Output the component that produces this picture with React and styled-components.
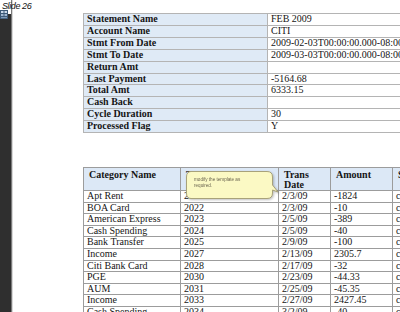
import React from 'react';
import styled, { createGlobalStyle } from 'styled-components';

const Global = createGlobalStyle`
  html, body { margin: 0; padding: 0; background: #fff; overflow: hidden; }
`;

const Page = styled.div`
  position: relative;
  display: flex;
  width: 400px;
  height: 312px;
  overflow: hidden;
`;

const Strip = styled.div`
  width: 11px;
  flex: none;
  background: linear-gradient(#fff 0 14px, #2f2f2f 14px);
  border-right: 1px solid #7a7a7a;
  box-shadow: 1px 0 0 #d8d8d8;
  padding-top: 5px;
`;

const SlideLabel = styled.div`
  position: absolute;
  left: 2px;
  top: 1px;
  font-family: "Liberation Sans", Arial, sans-serif;
  font-style: italic;
  font-size: 9px;
  letter-spacing: -0.4px;
  color: #111;
`;

const Content = styled.div`
  flex: 1;
  overflow: hidden;
  padding: 13px 0 0 71px;
  display: flex;
  flex-direction: column;
  gap: 34px;
`;

const Table = styled.table`
  border-collapse: collapse;
  table-layout: fixed;
  width: ${({ w }) => w}px;
  font-family: "Liberation Serif", "Times New Roman", serif;
  font-size: 10px;
  color: #151515;
`;

const Cell = styled.td`
  border: 1px solid ${({ soft }) => (soft ? '#b4b4b4' : '#9c9c9c')};
  padding: 0 3px;
  line-height: ${({ soft }) => (soft ? '10.9px' : '10.6px')};
  white-space: nowrap;
  overflow: hidden;
  font-weight: ${({ label }) => (label ? 'bold' : 'normal')};
  background: ${({ label }) => (label ? '#dfeaf6' : '#fff')};
`;

const Head = styled.th`
  border: 1px solid #9c9c9c;
  padding: 2px 5px 0;
  line-height: 10px;
  height: 17px;
  text-align: left;
  vertical-align: top;
  font-weight: bold;
  background: #dce8f6;
  white-space: nowrap;
  overflow: hidden;
`;

const Wrap = styled.div`
  position: relative;
`;

const Callout = styled.div`
  position: absolute;
  left: 103px;
  top: 4px;
  width: 94px;
  height: 30px;
  filter: drop-shadow(1px 1px 1px rgba(0, 0, 0, 0.25));
`;

const CalloutText = styled.div`
  position: absolute;
  left: 8px;
  top: 6px;
  width: 48px;
  font-family: "Liberation Sans", Arial, sans-serif;
  font-size: 4.6px;
  line-height: 6px;
  color: #6b6650;
`;

const summary = [
  ['Statement Name', 'FEB 2009'],
  ['Account Name', 'CITI'],
  ['Stmt From Date', '2009-02-03T00:00:00.000-08:00'],
  ['Stmt To Date', '2009-03-03T00:00:00.000-08:00'],
  ['Return Amt', ''],
  ['Last Payment', '-5164.68'],
  ['Total Amt', '6333.15'],
  ['Cash Back', ''],
  ['Cycle Duration', '30'],
  ['Processed Flag', 'Y'],
];

const rows = [
  ['Apt Rent', '2021', '2/3/09', '-1824'],
  ['BOA Card', '2022', '2/3/09', '-10'],
  ['American Express', '2023', '2/5/09', '-389'],
  ['Cash Spending', '2024', '2/5/09', '-40'],
  ['Bank Transfer', '2025', '2/9/09', '-100'],
  ['Income', '2027', '2/13/09', '2305.7'],
  ['Citi Bank Card', '2028', '2/17/09', '-32'],
  ['PGE', '2030', '2/23/09', '-44.33'],
  ['AUM', '2031', '2/25/09', '-45.35'],
  ['Income', '2033', '2/27/09', '2427.45'],
  ['Cash Spending', '2034', '3/2/09', '-40'],
];

const GridIcon = () => (
  <svg width="8" height="9" viewBox="0 0 8 9">
    <rect x="0" y="0" width="8" height="9" fill="#3d5a78" />
    <rect x="1" y="1" width="2.5" height="2" fill="#c9d8ea" />
    <rect x="4.5" y="1" width="2.5" height="2" fill="#c9d8ea" />
    <rect x="1" y="4" width="2.5" height="2" fill="#9fb6d0" />
    <rect x="4.5" y="4" width="2.5" height="2" fill="#9fb6d0" />
    <rect x="1" y="7" width="6" height="1.2" fill="#7f9aba" />
  </svg>
);

const Bubble = () => (
  <svg width="94" height="30" viewBox="0 0 94 30" style={{ position: 'absolute', left: 0, top: 0 }}>
    <path
      d="M5 0.5 H81 Q86.5 0.5 86.5 6 V14 L92 21 L86.5 19 V22 Q86.5 27.5 81 27.5 H5 Q0.5 27.5 0.5 22 V6 Q0.5 0.5 5 0.5 Z"
      fill="#fbf9c4"
      stroke="#a8a27a"
      strokeWidth="1"
    />
  </svg>
);

export default function App() {
  return (
    <>
      <Global />
      <Page>
        <Strip>
          <GridIcon />
        </Strip>
        <SlideLabel>Slide 26</SlideLabel>
        <Content>
          <Table w={370}>
            <colgroup>
              <col style={{ width: 184 }} />
              <col style={{ width: 186 }} />
            </colgroup>
            <tbody>
              {summary.map(([k, v]) => (
                <tr key={k}>
                  <Cell soft label>{k}</Cell>
                  <Cell soft>{v}</Cell>
                </tr>
              ))}
            </tbody>
          </Table>
          <Wrap>
            <Table w={370}>
              <colgroup>
                <col style={{ width: 97 }} />
                <col style={{ width: 98 }} />
                <col style={{ width: 52 }} />
                <col style={{ width: 62 }} />
                <col style={{ width: 61 }} />
              </colgroup>
              <thead>
                <tr>
                  <Head>Category Name</Head>
                  <Head>Transaction Id</Head>
                  <Head>Trans<br />Date</Head>
                  <Head>Amount</Head>
                  <Head>Status</Head>
                </tr>
              </thead>
              <tbody>
                {rows.map((r, i) => (
                  <tr key={i}>
                    {r.map((c, j) => (
                      <Cell key={j}>{c}</Cell>
                    ))}
                    <Cell>complete</Cell>
                  </tr>
                ))}
              </tbody>
            </Table>
            <Callout>
              <Bubble />
              <CalloutText>modify the template as required.</CalloutText>
            </Callout>
          </Wrap>
        </Content>
      </Page>
    </>
  );
}
